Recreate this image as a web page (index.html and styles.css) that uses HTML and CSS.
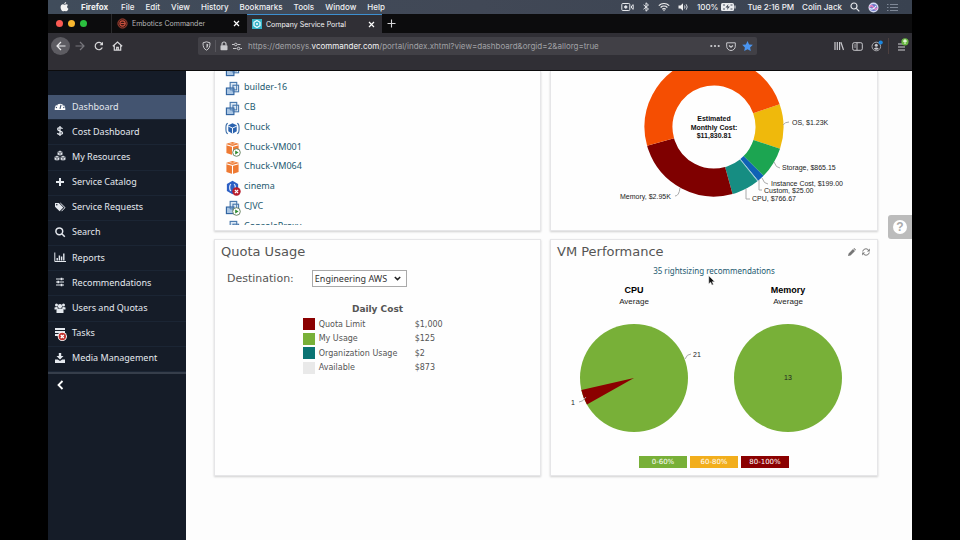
FILE: index.html
```html
<!DOCTYPE html>
<html lang="en">
<head>
    <meta charset="UTF-8">
    <meta name="viewport" content="width=device-width, initial-scale=1.0">
    <title>Company Service Portal</title>
    <link rel="stylesheet" href="styles.css">
</head>
<body>
    <!-- Shared VM icons -->
    <svg class="sprite" aria-hidden="true">
        <symbol id="vm" viewBox="0 0 16 16">
            <rect x="5.5" y="1.5" width="7" height="8" fill="#dce8f4" stroke="#4a79ad" stroke-width="1.2"/>
            <rect x="8.5" y="4.5" width="6" height="7" fill="none" stroke="#4a79ad" stroke-width="1.2"/>
            <rect x="1.5" y="7.5" width="8" height="7" fill="#a9c5e3" stroke="#2f639f" stroke-width="1.2"/>
            <path d="M5.5 7.5v2h4M8.5 7.5v4h1" fill="none" stroke="#4a79ad"/>
        </symbol>
        <symbol id="cube" viewBox="0 0 16 16">
            <path d="M8 1l6.500 1.800v10L8 15l-6.500-2.200v-10z" fill="#ee7a33"/>
            <path d="M1.500 4L8 5.800 14.500 4M8 5.800V15" fill="none" stroke="#fff" stroke-width="1.1"/>
            <path d="M4.700 2.500L8 3.400l3.300-.9" fill="none" stroke="#fbd3b8" stroke-width=".8"/>
        </symbol>
        <symbol id="stack" viewBox="0 0 16 16">
            <path d="M3 2.500C.8 3 1 5 1 8s-.2 5 2 5.500M13 2.500c2.200.5 2 2.500 2 5.500s.2 5-2 5.500" fill="none" stroke="#3c6ea8" stroke-width="1.2"/>
            <path d="M8 2.500l4.500 2v6.500L8 13.500 3.500 11V4.500z" fill="#2a62ae"/>
            <path d="M3.500 5.500L8 7.500l4.500-2M8 7.500v6" fill="none" stroke="#fff"/>
        </symbol>
        <symbol id="hex" viewBox="0 0 16 16">
            <path d="M8 .8l6 3.400v7.600l-6 3.400-6-3.400V4.200z" fill="#2c5fc4"/>
            <path d="M6.500 4.500C4.500 5 4.500 11 6.500 11.500M9.500 4.500c2 .5 2 6.500 0 7" fill="none" stroke="#dfe9fb" stroke-width="1.3"/>
        </symbol>
        <symbol id="badge-run" viewBox="0 0 9 9">
            <circle cx="4.5" cy="4.5" r="3.8" fill="#fff" stroke="#5d7a58" stroke-width=".9"/>
            <path d="M3.200 2.400l3.400 2.100-3.400 2.100z" fill="#2d8b2d"/>
        </symbol>
        <symbol id="badge-fail" viewBox="0 0 9 9">
            <circle cx="4.5" cy="4.5" r="4.2" fill="#b81d2c"/>
            <path d="M2.900 2.900l3.200 3.200M6.100 2.900L2.900 6.100" stroke="#fff" stroke-width="1.3"/>
        </symbol>
    </svg>

    <div class="screen">
        <header class="menubar">
            <nav class="menus">
                <svg class="apple" viewBox="0 0 10 12"><path d="M7 0c.1 1.300-1 2.500-2.200 2.500C4.700 1.300 5.800.2 7 0zM5 3.200c.5 0 1.200-.6 2.200-.6.8 0 1.600.4 2.100 1.100C7.500 4.800 7.800 7.300 9.700 8c-.5 1.400-1.500 3.100-2.600 3.100-.8 0-1-.4-1.900-.4s-1.200.4-2 .4C1.900 11.100.3 8.600.3 6.200c0-2.300 1.400-3.500 2.800-3.500.9 0 1.500.5 1.900.5z" fill="#f2f2f2"/></svg>
                <b>Firefox</b>
                <span>File</span>
                <span>Edit</span>
                <span>View</span>
                <span>History</span>
                <span>Bookmarks</span>
                <span>Tools</span>
                <span>Window</span>
                <span>Help</span>
            </nav>
            <div class="status">
                <svg width="13" height="10" viewBox="0 0 13 10" fill="none" stroke="#e4e6ea"><rect x=".8" y="1.5" width="8" height="7" rx="1"/><circle cx="4.8" cy="5" r="1.2" fill="#e4e6ea"/><path d="M10.500 4l1.700-1.300v4.600L10.500 6z"/></svg>
                <svg width="8" height="10" viewBox="0 0 8 10" fill="none" stroke="#e4e6ea"><path d="M1.500 2.800l5 4.200L4 9.200V.8L6.500 3l-5 4.200"/></svg>
                <svg width="12" height="10" viewBox="0 0 12 10" fill="none" stroke="#f0f0f0" stroke-width="1.2"><path d="M.8 3.600a7.500 7.500 0 0 1 10.400 0M2.600 5.500a5 5 0 0 1 6.800 0M4.300 7.300a2.500 2.500 0 0 1 3.400 0"/><circle cx="6" cy="8.6" r=".7" fill="#f0f0f0" stroke="none"/></svg>
                <svg width="11" height="10" viewBox="0 0 11 10"><path d="M.5 3.500h2L5 1.300v7.400L2.500 6.500h-2z" fill="#f0f0f0"/><path d="M6.500 3.500q1 1.500 0 3M8.200 2.300q2 2.700 0 5.400" fill="none" stroke="#d5d8dd"/></svg>
                <span class="battery">100%
                    <svg width="15" height="8" viewBox="0 0 15 8"><rect width="13" height="8" rx="1.5" fill="#e9ebee"/><rect x="13.5" y="2.5" width="1" height="3" fill="#e9ebee"/><path d="M2 2h2M2 6h2M9.500 2h2M9.500 6h2" stroke="#4a5260"/><path d="M7.500 1L4.500 4.500h2.200L5.900 7l3-3.500H6.700z" fill="#3a4250"/></svg>
                </span>
                <span>Tue 2:16 PM</span>
                <span>Colin Jack</span>
                <svg width="10" height="10" viewBox="0 0 10 10" fill="none" stroke="#e4e6ea" stroke-width="1.2"><circle cx="4" cy="4" r="3"/><path d="M6.300 6.300l3 3"/></svg>
                <svg width="11" height="11" viewBox="0 0 11 11"><circle cx="5.5" cy="5.5" r="5" fill="#d5daf2"/><circle cx="5.5" cy="5.5" r="3.6" fill="#6f78c8"/><path d="M1.500 5.500q2-3.500 4 0t4 0" fill="none" stroke="#f07fc0" stroke-width="1.3"/><path d="M2 6.500q3 2 6-2.500" fill="none" stroke="#e8f6ff" stroke-width="1.2"/></svg>
                <svg width="11" height="9" viewBox="0 0 11 9" stroke="#7f8897"><path d="M0 1.500h1.500M3 1.500h8M0 4.500h1.500M3 4.500h8M0 7.500h1.500M3 7.500h8"/></svg>
            </div>
        </header>

        <div class="tabstrip">
            <div class="lights"><i class="red"></i><i class="yellow"></i><i class="green"></i></div>
            <div class="tab">
                <svg width="11" height="11" viewBox="0 0 11 11"><circle cx="5.5" cy="5.5" r="4.6" fill="#3a1512" stroke="#a54334"/><circle cx="5.5" cy="5.5" r="2.6" fill="none" stroke="#c4503d" stroke-width="1.1"/><path d="M3.500 5.500h5" stroke="#c4503d"/></svg>
                <span class="tab-title">Embotics Commander</span>
                <button class="tab-close" aria-label="Close tab"><svg width="7" height="7" viewBox="0 0 7 7"><path d="M1 1l5 5M6 1L1 6" stroke="#fff" stroke-width="1.2"/></svg></button>
            </div>
            <div class="tab active">
                <svg width="10" height="10" viewBox="0 0 10 10"><rect width="10" height="10" fill="#35b1c6"/><path d="M5 1.500l3 1.800v3.400L5 8.500 2 6.700V3.300z" fill="none" stroke="#e6fbff" stroke-width="1.3"/><circle cx="5" cy="5" r="1" fill="#fff"/></svg>
                <span class="tab-title">Company Service Portal</span>
                <button class="tab-close" aria-label="Close tab"><svg width="7" height="7" viewBox="0 0 7 7"><path d="M1 1l5 5M6 1L1 6" stroke="#fff" stroke-width="1.2"/></svg></button>
            </div>
            <button class="new-tab" aria-label="New tab"><svg width="9" height="9" viewBox="0 0 9 9"><path d="M4.500 .5v8M.5 4.500h8" stroke="#d6d6d8" stroke-width="1.1"/></svg></button>
        </div>

        <div class="toolbar">
            <div class="nav-buttons">
                <button class="back" aria-label="Back"><svg width="10" height="10" viewBox="0 0 10 10" fill="none" stroke="#ececee" stroke-width="1.2"><path d="M9.500 5H1M5 1L1 5l4 4"/></svg></button>
                <button aria-label="Forward"><svg width="10" height="10" viewBox="0 0 10 10" fill="none" stroke="#77767c" stroke-width="1.2"><path d="M.5 5H9M5 1l4 4-4 4"/></svg></button>
                <button aria-label="Reload"><svg width="10" height="10" viewBox="0 0 10 10" fill="none" stroke="#d8d8da" stroke-width="1.2"><path d="M8.300 6.500A3.700 3.700 0 1 1 8 3"/><path d="M9 .8v3.400H5.600z" fill="#d8d8da" stroke="none"/></svg></button>
                <button aria-label="Home"><svg width="11" height="10" viewBox="0 0 11 10" fill="none" stroke="#d8d8da" stroke-width="1.2"><path d="M.8 5.300L5.500 1l4.700 4.300M2.300 4.500v4.700h6.400V4.500M4.700 9V6.300h1.600V9"/></svg></button>
            </div>
            <div class="urlbar">
                <div class="site-info">
                    <svg width="9" height="10" viewBox="0 0 9 10" fill="none" stroke="#c8c8cc"><path d="M4.500.8l3.500 1c0 4-.8 6-3.500 7.400C1.800 7.800 1 5.800 1 1.800z"/><path d="M4.500 2.800v4.500c1.400-1 1.700-2.300 1.700-4z" fill="#c8c8cc" stroke="none"/></svg>
                    <i class="url-sep"></i>
                    <svg width="8" height="10" viewBox="0 0 8 10"><rect x=".5" y="4.2" width="7" height="5" rx=".8" fill="#c8c8cc"/><path d="M2 4.500V3a2 2 0 0 1 4 0v1.500" fill="none" stroke="#c8c8cc" stroke-width="1.2"/></svg>
                    <svg width="10" height="9" viewBox="0 0 10 9" fill="none" stroke="#c8c8cc"><path d="M0 2.500h2M5.500 2.500h3M1 6.500h3.500M8.500 6.500H10"/><circle cx="3.8" cy="2.5" r="1.3"/><circle cx="6.6" cy="6.5" r="1.3"/></svg>
                </div>
                <span class="url">https://demosys.<b>vcommander.com</b>/portal/index.xhtml?view=dashboard&amp;orgid=2&amp;allorg=true</span>
                <svg width="10" height="4" viewBox="0 0 10 4" fill="#d0d0d4"><circle cx="1.3" cy="2" r="1.1"/><circle cx="5" cy="2" r="1.1"/><circle cx="8.7" cy="2" r="1.1"/></svg>
                <svg width="10" height="9" viewBox="0 0 10 9" fill="none" stroke="#c8c8cc"><path d="M.7.8h8.600v3.400a4.300 4.300 0 0 1-8.600 0z"/><path d="M3 3.500l2 1.800 2-1.800" stroke-width="1.2"/></svg>
                <svg width="11" height="10" viewBox="0 0 11 10"><path d="M5.500 0l1.600 3.400 3.700.4-2.700 2.600.7 3.600-3.300-1.800L2.200 10l.7-3.600L.2 3.800l3.700-.4z" fill="#4a94ee"/></svg>
            </div>
            <div class="tools">
                <svg width="10" height="10" viewBox="0 0 10 10" fill="none" stroke="#c8c8cc" stroke-width="1.2"><path d="M1 1v8M3.300 1v8M5.600 1v8M6.900 1.200L9.500 9"/></svg>
                <svg width="11" height="9" viewBox="0 0 11 9" fill="none" stroke="#c8c8cc"><rect x=".7" y=".7" width="9.600" height="7.600" rx="1.5"/><path d="M5 .7v7.600M2.300 3h1.500M2.300 5h1.500"/></svg>
                <svg width="12" height="12" viewBox="0 0 12 12"><circle cx="5.3" cy="6.5" r="4.3" fill="none" stroke="#a8a8ac"/><circle cx="5.3" cy="5.3" r="1.5" fill="#c8c8cc"/><path d="M2.800 8.800q2.500-2.600 5 0-2.500 2-5 0z" fill="#c8c8cc"/><circle cx="9.7" cy="2.5" r="2.1" fill="#1a86e0"/></svg>
                <svg class="app-menu" width="12" height="16" viewBox="0 0 12 16"><path d="M1 6h7M1 9h7M1 12h7" stroke="#d0d0d4" stroke-width="1.2"/><circle cx="8" cy="3.8" r="3.6" fill="#6bb944"/><path d="M8 6V2M6.300 3.500L8 1.800l1.700 1.700" fill="none" stroke="#e2f6d8" stroke-width="1.1"/></svg>
            </div>
        </div>

        <div class="portal">
            <aside class="sidebar">
                <ul class="side-menu">
                    <li class="current"><a href="#"><svg viewBox="0 0 12 12"><path d="M.8 10A5.300 5.300 0 1 1 11.200 10z" fill="#fff"/><path d="M6 8.800l1-4" stroke="#435470" stroke-width="1.2"/><g fill="#435470"><circle cx="3" cy="4.8" r=".7"/><circle cx="5" cy="3.5" r=".6"/><circle cx="9.2" cy="5" r=".7"/><circle cx="2.4" cy="7.5" r=".7"/><circle cx="9.8" cy="7.5" r=".7"/></g></svg>Dashboard</a></li>
                    <li><a href="#"><svg viewBox="0 0 12 12" fill="none" stroke="#e4e8ee" stroke-width="1.3"><path d="M8.500 3.800C7.800 2.300 3.700 2 3.700 4.200c0 2.300 4.800 1.300 4.800 3.700C8.500 10 4 9.800 3.400 8M6 1v10"/></svg>Cost Dashboard</a></li>
                    <li><a href="#"><svg viewBox="0 0 12 12" fill="#e4e8ee" stroke="#151c28" stroke-width=".6"><path d="M6 .5l2.800 1.200v3L6 6 3.200 4.700v-3zM3 5.500l2.800 1.200v3L3 11 .2 9.700v-3zM9 5.500l2.800 1.200v3L9 11 6.200 9.700v-3z"/><path d="M3.200 1.700L6 3l2.800-1.300M6 3v3M.2 6.700L3 8l2.800-1.300M3 8v3M6.200 6.700L9 8l2.800-1.300M9 8v3" fill="none"/></svg>My Resources</a></li>
                    <li><a href="#"><svg viewBox="0 0 12 12"><path d="M6 2v8M2 6h8" stroke="#e4e8ee" stroke-width="2"/></svg>Service Catalog</a></li>
                    <li><a href="#"><svg viewBox="0 0 12 12"><path d="M1 2h3.800l4.500 4.500-3.700 3.700L1 5.800z" fill="#e4e8ee"/><path d="M6.300 2L11 6.600l-3.500 3.600" fill="none" stroke="#e4e8ee"/><circle cx="2.8" cy="3.8" r=".8" fill="#151c28"/></svg>Service Requests</a></li>
                    <li><a href="#"><svg viewBox="0 0 12 12" fill="none" stroke="#e4e8ee" stroke-width="1.5"><circle cx="5.3" cy="5.3" r="3.4"/><path d="M7.800 7.800l3 3"/></svg>Search</a></li>
                    <li><a href="#"><svg viewBox="0 0 12 12" fill="none" stroke="#e4e8ee"><path d="M.8 1.500v9H12"/><path d="M3.200 9.500V7M5.400 9.500V4.500M7.600 9.500V5.500M9.800 9.500v-7" stroke-width="1.4"/></svg>Reports</a></li>
                    <li><a href="#"><svg viewBox="0 0 12 12" fill="none" stroke="#e4e8ee"><path d="M2 3h8M2 6h8M2 9h8"/><path d="M7.500 1.800v2.400M4.200 4.800v2.400M7.500 7.800v2.400" stroke-width="1.6"/></svg>Recommendations</a></li>
                    <li><a href="#"><svg viewBox="0 0 12 12" fill="#e4e8ee"><circle cx="2.5" cy="3" r="1.5"/><circle cx="9.5" cy="3" r="1.5"/><circle cx="6" cy="4.2" r="2.1"/><path d="M.5 7.500V5.500q1.500-1 3-.3L4 6 3 7.500zM11.500 7.500V5.500q-1.500-1-3-.3L8 6l1 1.500zM2.500 11V8q1-1.800 3.500-1.400Q8.500 6.200 9.500 8v3z"/></svg>Users and Quotas</a></li>
                    <li><a href="#"><svg viewBox="0 0 12 12" overflow="visible"><path d="M1 2h10M1 5h10M1 8h7" stroke="#e4e8ee" stroke-width="2"/><circle cx="8.3" cy="9.5" r="4.6" fill="#fff"/><circle cx="8.3" cy="9.5" r="3.7" fill="#c0322f"/><path d="M6.800 8l3 3M9.800 8l-3 3" stroke="#fff" stroke-width="1.3"/></svg>Tasks</a></li>
                    <li><a href="#"><svg viewBox="0 0 12 12" fill="#e4e8ee"><path d="M4.800 1h2.400v3h2.300L6 7.500 2.500 4h2.300z"/><path d="M1 7.500h2.800L6 9l2.200-1.500H11V11H1z"/></svg>Media Management</a></li>
                </ul>
                <button class="collapse" aria-label="Collapse menu"><svg width="7" height="10" viewBox="0 0 7 10"><path d="M5.500 1L1.500 5l4 4" fill="none" stroke="#fff" stroke-width="1.8"/></svg></button>
            </aside>

            <main class="dashboard">
                <section class="card cut">
                    <div class="vm-scroll">
                        <ul class="vm-list">
                            <li><a href="#"><span class="vm-icon"><svg><use href="#vm"/></svg></span></a></li>
                            <li><a href="#"><span class="vm-icon"><svg><use href="#vm"/></svg></span>builder-16</a></li>
                            <li><a href="#"><span class="vm-icon"><svg><use href="#vm"/></svg></span>CB</a></li>
                            <li><a href="#"><span class="vm-icon"><svg><use href="#stack"/></svg></span>Chuck</a></li>
                            <li><a href="#"><span class="vm-icon"><svg><use href="#cube"/></svg><svg class="vm-badge"><use href="#badge-run"/></svg></span>Chuck-VM001</a></li>
                            <li><a href="#"><span class="vm-icon"><svg><use href="#cube"/></svg></span>Chuck-VM064</a></li>
                            <li><a href="#"><span class="vm-icon"><svg><use href="#hex"/></svg><svg class="vm-badge"><use href="#badge-fail"/></svg></span>cinema</a></li>
                            <li><a href="#"><span class="vm-icon"><svg><use href="#vm"/></svg><svg class="vm-badge"><use href="#badge-run"/></svg></span>CJVC</a></li>
                            <li><a href="#"><span class="vm-icon"><svg><use href="#vm"/></svg></span>ConsoleProxy</a></li>
                        </ul>
                    </div>
                </section>

                <section class="card cut">
                    <svg class="donut" width="326" height="154" viewBox="0 0 326 154">
                        <!-- pathLength is 360, so dashes are in degrees; the OS slice comes first -->
                        <g fill="none" stroke-width="28" transform="rotate(-19.2 163 56)">
                            <circle cx="163" cy="56" r="55.5" pathLength="360" stroke="#efb90c" stroke-dasharray="37.4 360"/>
                            <circle cx="163" cy="56" r="55.5" pathLength="360" stroke="#1ca551" stroke-dasharray="26.3 360" stroke-dashoffset="-37.4"/>
                            <circle cx="163" cy="56" r="55.5" pathLength="360" stroke="#0f62b5" stroke-dasharray="6 360" stroke-dashoffset="-63.7"/>
                            <circle cx="163" cy="56" r="55.5" pathLength="360" stroke="#8fc7d8" stroke-dasharray="0.8 360" stroke-dashoffset="-69.7"/>
                            <circle cx="163" cy="56" r="55.5" pathLength="360" stroke="#168d82" stroke-dasharray="23.3 360" stroke-dashoffset="-70.5"/>
                            <circle cx="163" cy="56" r="55.5" pathLength="360" stroke="#7f0000" stroke-dasharray="89.8 360" stroke-dashoffset="-93.8"/>
                            <circle cx="163" cy="56" r="55.5" pathLength="360" stroke="#f54e02" stroke-dasharray="176.4 360" stroke-dashoffset="-183.6"/>
                        </g>
                        <g class="leaders">
                            <path d="M232 54q2-3 6-3"/>
                            <path d="M223 91q2 6 6 6"/>
                            <path d="M211 107q2 6 6 6"/>
                            <path d="M208 109v10h3"/>
                            <path d="M195 118v10h4"/>
                            <path d="M129 117q-1 8-5 8"/>
                        </g>
                        <g class="labels">
                            <text x="241" y="54">OS, $1.23K</text>
                            <text x="231" y="99">Storage, $865.15</text>
                            <text x="220" y="115">Instance Cost, $199.00</text>
                            <text x="213" y="122">Custom, $25.00</text>
                            <text x="201" y="130">CPU, $766.67</text>
                            <text x="69" y="128">Memory, $2.95K</text>
                        </g>
                        <g class="total">
                            <text x="163" y="50">Estimated</text>
                            <text x="163" y="59">Monthly Cost:</text>
                            <text x="163" y="67">$11,830.81</text>
                        </g>
                    </svg>
                </section>

                <section class="card quota">
                    <h2>Quota Usage</h2>
                    <div class="destination">
                        <label for="destination">Destination:</label>
                        <div class="select-box">
                            <select id="destination">
                                <option>Engineering AWS</option>
                            </select>
                            <svg width="7" height="5" viewBox="0 0 7 5"><path d="M.8 1l2.700 2.600L6.200 1" fill="none" stroke="#222" stroke-width="1.5"/></svg>
                        </div>
                    </div>
                    <table class="daily-cost">
                        <caption>Daily Cost</caption>
                        <tbody>
                            <tr><td><i class="swatch limit"></i></td><th scope="row">Quota Limit</th><td>$1,000</td></tr>
                            <tr><td><i class="swatch usage"></i></td><th scope="row">My Usage</th><td>$125</td></tr>
                            <tr><td><i class="swatch org"></i></td><th scope="row">Organization Usage</th><td>$2</td></tr>
                            <tr><td><i class="swatch free"></i></td><th scope="row">Available</th><td>$873</td></tr>
                        </tbody>
                    </table>
                </section>

                <section class="card performance">
                    <div class="card-head">
                        <h2>VM Performance</h2>
                        <button aria-label="Edit"><svg width="8" height="8" viewBox="0 0 8 8"><path d="M0 8l.6-2.500L5 1l2 2-4.500 4.400zM5.500.6L6.200 0 8 1.800l-.6.7z" fill="#777"/></svg></button>
                        <button aria-label="Refresh"><svg width="8" height="8" viewBox="0 0 8 8"><path d="M.7 3.500A3.300 3.300 0 0 1 6.500 2M7.300 4.500A3.300 3.300 0 0 1 1.500 6" fill="none" stroke="#777"/><path d="M7.800.5v3H4.900zM.2 7.500v-3h2.900z" fill="#777"/></svg></button>
                    </div>
                    <a class="rightsizing" href="#">35 rightsizing recommendations</a>
                    <div class="pies">
                        <figure>
                            <figcaption><b>CPU</b>Average</figcaption>
                            <svg width="154" height="110" viewBox="0 0 154 110">
                                <circle cx="77" cy="55" r="54" fill="#78b038"/>
                                <circle cx="77" cy="55" r="27" fill="none" stroke="#8b0000" stroke-width="54" pathLength="360" stroke-dasharray="16.4 360" stroke-dashoffset="-150.6"/>
                                <g class="leaders"><path d="M128 36q2-5 6-5M29 74q-3 5-7 5"/></g>
                                <g class="labels"><text x="136" y="34">21</text><text x="14" y="82">1</text></g>
                            </svg>
                        </figure>
                        <figure>
                            <figcaption><b>Memory</b>Average</figcaption>
                            <svg width="154" height="110" viewBox="0 0 154 110">
                                <circle cx="77" cy="55" r="54" fill="#78b038"/>
                                <g class="labels"><text x="73" y="57">13</text></g>
                            </svg>
                        </figure>
                    </div>
                    <div class="legend">
                        <span class="low">0-60%</span>
                        <span class="mid">60-80%</span>
                        <span class="high">80-100%</span>
                    </div>
                    <svg class="pointer" width="8" height="11" viewBox="0 0 8 11"><path d="M.8.8v8l1.900-1.600 1.200 2.900 1.500-.7-1.200-2.700h2.500z" fill="#111" stroke="#eee" stroke-width=".5"/></svg>
                </section>
            </main>

            <button class="help" aria-label="Help"><span>?</span></button>
        </div>
    </div>
</body>
</html>
```

FILE: styles.css
```css
* {
    box-sizing: border-box;
}

body {
    margin: 0;
    background: #000;
    font-family: "Noto Sans", sans-serif;
    font-size: 9px;
}

ul {
    list-style: none;
    margin: 0;
    padding: 0;
}

a {
    text-decoration: none;
}

button {
    display: flex;
    align-items: center;
    justify-content: center;
    padding: 0;
    border: none;
    background: none;
    cursor: pointer;
}

svg {
    display: block;
    flex: none;
}

.sprite {
    position: absolute;
    width: 0;
    height: 0;
}

.screen {
    display: flex;
    flex-direction: column;
    height: 100vh;
    margin: 0 5%;
    overflow: hidden;
}

/* macOS menu bar */
.menubar {
    display: flex;
    justify-content: space-between;
    align-items: center;
    height: 14px;
    padding: 0 14px 0 12px;
    background: linear-gradient(90deg, #404c5b, #414856 50%, #394250);
    color: #f0f1f3;
    font-family: Inter, sans-serif;
    font-size: 8px;
    font-weight: 500;
    line-height: 14px;
    white-space: nowrap;
}

.menus {
    display: flex;
    align-items: center;
    gap: 11px;
}

.menus b {
    padding: 0 2px 0 1px;
    font-weight: 700;
}

.apple {
    width: 9px;
    height: 10px;
}

.status {
    display: flex;
    align-items: center;
    gap: 8px;
}

.battery {
    display: flex;
    align-items: center;
    gap: 2px;
    padding-right: 4px;
}

/* Firefox chrome */
.tabstrip {
    display: flex;
    align-items: stretch;
    height: 19px;
    background: #0c0c0d;
}

.lights {
    display: flex;
    align-items: center;
    gap: 5px;
    width: 64px;
    padding-left: 8px;
    border-right: 1px solid #2a2a2c;
}

.lights i {
    width: 7px;
    height: 7px;
    border-radius: 50%;
}

.red { background: #fb5a53; }
.yellow { background: #f8b72f; }
.green { background: #2bc13f; }

.tab {
    display: flex;
    align-items: center;
    gap: 4px;
    width: 135px;
    padding: 0 7px 0 5px;
    color: #b8b8ba;
    font-family: Inter, sans-serif;
    font-size: 7px;
}

.tab.active {
    border-top: 1px solid #3d8fd0;
    background: #302f35;
    color: #f4f4f5;
}

.tab-title {
    flex: 1;
    white-space: nowrap;
}

.new-tab {
    padding-left: 5px;
}

.toolbar {
    display: flex;
    align-items: flex-start;
    height: 38px;
    padding-top: 4px;
    border-bottom: 1px solid #0c0c0d;
    background: #302f35;
}

.nav-buttons {
    display: flex;
    width: 150px;
    padding-left: 3px;
}

.nav-buttons button {
    width: 19px;
    height: 18px;
    border-radius: 50%;
}

.nav-buttons .back {
    background: #5d5c62;
}

.urlbar {
    display: flex;
    flex: 1;
    align-items: center;
    gap: 6px;
    height: 18px;
    padding: 0 4px;
    border-radius: 2px;
    background: #414046;
}

.site-info {
    display: flex;
    align-items: center;
    gap: 4px;
}

.url-sep {
    width: 1px;
    height: 12px;
    background: #58575d;
}

.url {
    flex: 1;
    color: #a0a0a5;
    font-family: Inter, sans-serif;
    font-size: 8px;
    white-space: nowrap;
}

.url b {
    color: #f4f4f5;
    font-weight: 400;
}

.tools {
    display: flex;
    align-items: center;
    justify-content: flex-end;
    gap: 8px;
    width: 155px;
    height: 18px;
    padding-right: 3px;
}

.app-menu {
    box-sizing: content-box;
    margin-left: -3px;
    padding-left: 8px;
    border-left: 1px solid #4c3f3f;
}

/* Portal */
.portal {
    position: relative;
    display: flex;
    flex: 1;
    min-height: 0;
    background: #fdfdfd;
}

.sidebar {
    width: 138px;
    padding-top: 24px;
    background: #151c28;
}

.side-menu {
    display: grid;
    grid-auto-rows: 1fr;
    height: 279px;
    border-bottom: 2px solid #363e4b;
}

.side-menu li {
    border-bottom: 1px solid #1b2534;
}

.side-menu .current {
    background: #435470;
}

.side-menu a {
    display: flex;
    align-items: center;
    gap: 6px;
    height: 100%;
    padding: 0 0 2px 6px;
    color: #e4e8ee;
}

.side-menu svg {
    width: 12px;
    height: 12px;
}

.collapse {
    width: 24px;
    height: 22px;
}

.dashboard {
    display: grid;
    grid-template-columns: 1fr 1fr;
    grid-template-rows: 160px 237px;
    gap: 8px 9px;
    flex: 1;
    padding: 0 34px 0 28px;
}

.card {
    position: relative;
    border: 1px solid #e6e6e8;
    background: #fefefe;
    box-shadow: 0 1px 2px rgba(0,0,0,0.18);
    font-family: "DejaVu Sans", sans-serif;
}

.card.cut {
    border-top: none;
}

.card h2 {
    margin: 0;
    color: #555;
    font-size: 13px;
    font-weight: 400;
    line-height: 24px;
}

.vm-scroll {
    display: flex;
    align-items: center;
    height: 154px;
    padding: 0 0 3px 10px;
    overflow: hidden;
    font-family: "Noto Sans", sans-serif;
}

.vm-list {
    display: grid;
    grid-auto-rows: 1fr;
    flex: none;
    height: 178px;
}

.vm-list a {
    display: flex;
    align-items: center;
    gap: 4px;
    color: #1d5a70;
}

.vm-icon {
    position: relative;
    padding-top: 4px;
}

.vm-icon svg {
    width: 15px;
    height: 15px;
}

.vm-icon .vm-badge {
    position: absolute;
    right: -1px;
    bottom: -1px;
    width: 9px;
    height: 9px;
}

.donut {
    margin: 0 auto;
}

.labels {
    fill: #222;
    font-family: "Liberation Sans", sans-serif;
    font-size: 7px;
}

.total {
    fill: #111;
    font-family: "Liberation Sans", sans-serif;
    font-size: 7px;
    font-weight: 700;
    text-anchor: middle;
}

.leaders {
    fill: none;
    stroke: #aaa;
}

/* Quota */
.quota {
    padding: 0 6px;
}

.destination {
    display: flex;
    align-items: center;
    gap: 18px;
    padding: 6px;
    color: #555;
    font-size: 11px;
}

.select-box {
    position: relative;
}

.select-box select {
    width: 95px;
    height: 17px;
    padding: 0 2px;
    border: 1px solid #aaa;
    border-radius: 0;
    background: #fff;
    color: #333;
    appearance: none;
    font-family: "Noto Sans", sans-serif;
    font-size: 9px;
}

.select-box svg {
    position: absolute;
    top: 6px;
    right: 6px;
    pointer-events: none;
}

.daily-cost {
    width: 150px;
    height: 58px;
    margin: 10px auto 0;
    border-collapse: collapse;
    color: #555;
    font-size: 8px;
}

.daily-cost caption {
    padding-bottom: 2px;
    font-size: 9px;
    font-weight: 700;
    line-height: 12px;
}

.daily-cost th {
    width: 96px;
    padding: 0;
    font-weight: 400;
    text-align: left;
}

.daily-cost td {
    padding: 0;
}

.swatch {
    display: block;
    width: 12px;
    height: 12px;
}

.limit { background: #8b0000; }
.usage { background: #78b038; }
.org { background: #0b7373; }
.free { background: #e9e9e9; }

/* Performance */
.card-head {
    display: flex;
    align-items: center;
    gap: 6px;
    padding: 0 7px 0 6px;
}

.card-head h2 {
    flex: 1;
}

.rightsizing {
    display: block;
    color: #1d5a70;
    font-family: "Noto Sans", sans-serif;
    font-size: 8px;
    line-height: 14px;
    text-align: center;
}

.pies {
    display: flex;
    justify-content: center;
    padding: 7px 6px 0 0;
}

.pies figure {
    margin: 0;
}

.pies figcaption {
    padding-bottom: 16px;
    color: #222;
    font-family: "Liberation Sans", sans-serif;
    font-size: 8px;
    line-height: 11px;
    text-align: center;
}

.pies b {
    display: block;
    color: #000;
    font-size: 9px;
}

.legend {
    display: flex;
    justify-content: center;
    gap: 3px;
    padding-top: 23px;
}

.legend span {
    width: 48px;
    color: #fff;
    font-size: 7px;
    line-height: 12px;
    text-align: center;
}

.low { background: #78b038; }
.mid { background: #f2ae1c; }
.high { background: #8b0000; }

.pointer {
    position: absolute;
    top: 35px;
    left: 157px;
}

.help {
    position: absolute;
    top: 144px;
    right: 0;
    width: 24px;
    height: 24px;
    border-radius: 3px 0 0 3px;
    background: #bcbcbc;
}

.help span {
    width: 14px;
    border-radius: 50%;
    background: #fff;
    color: #aaa;
    font-family: "Liberation Sans", sans-serif;
    font-size: 12px;
    font-weight: 700;
    line-height: 14px;
}
```
